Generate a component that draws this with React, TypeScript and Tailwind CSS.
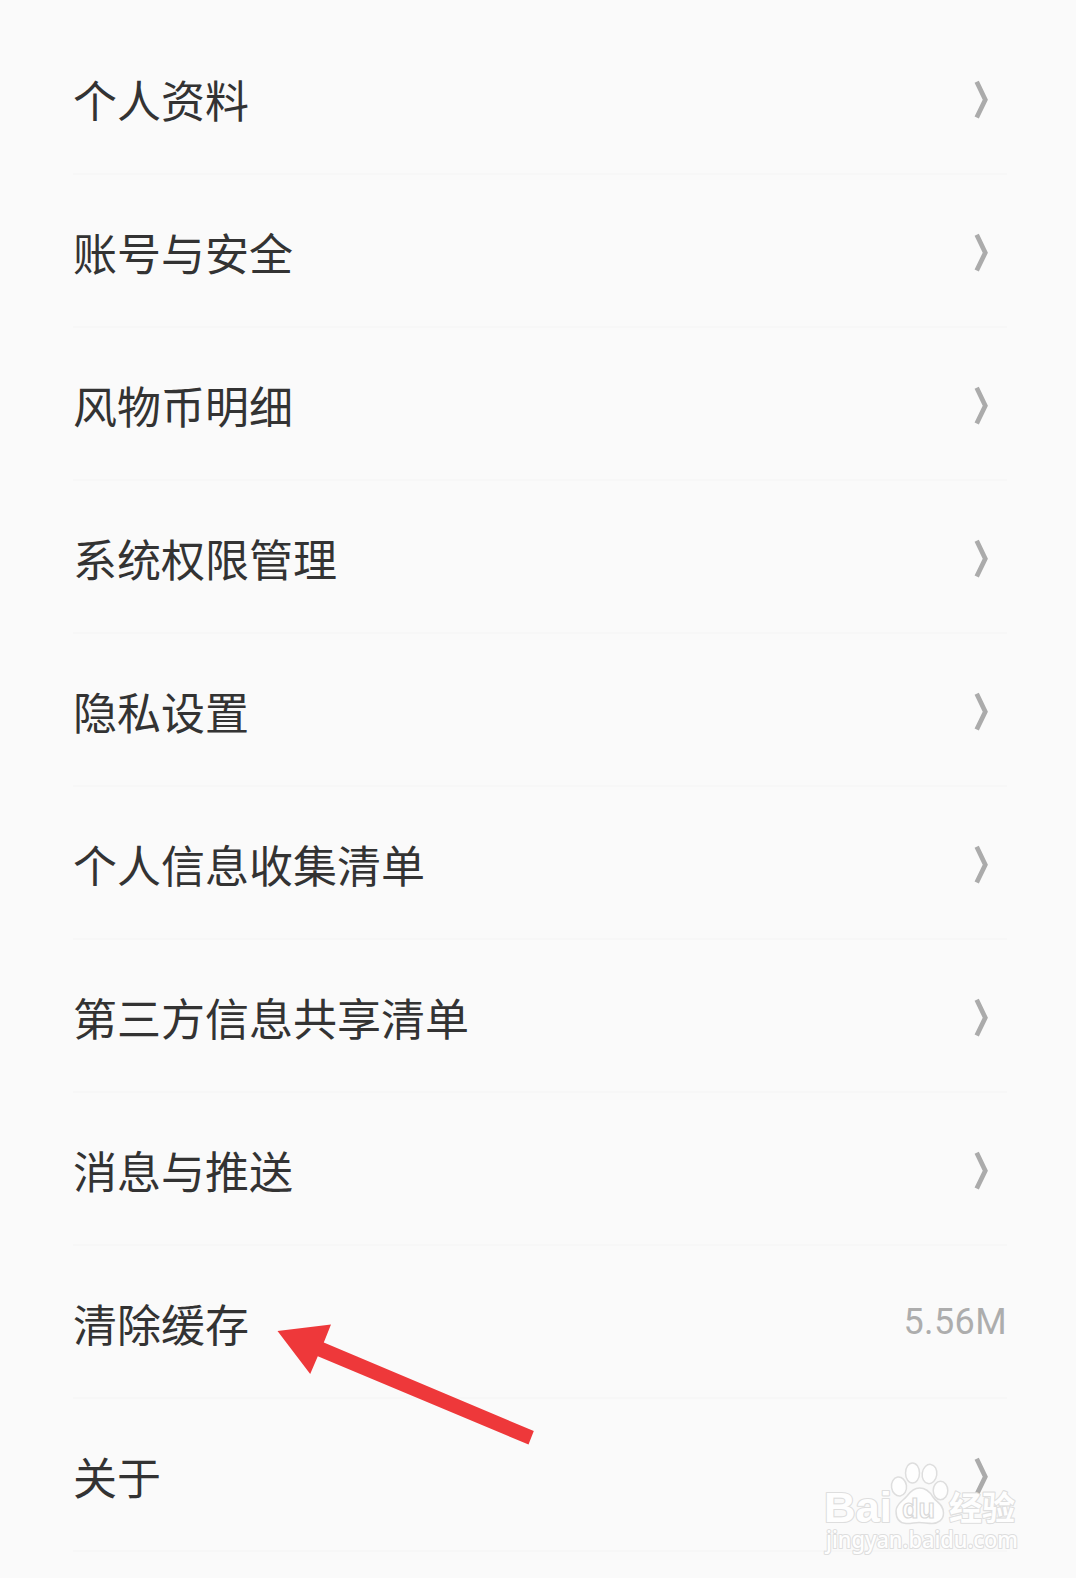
import React from 'react';

interface SettingItem {
  label: string;
  value?: string;
}

const items: SettingItem[] = [
  { label: '个人资料' },
  { label: '账号与安全' },
  { label: '风物币明细' },
  { label: '系统权限管理' },
  { label: '隐私设置' },
  { label: '个人信息收集清单' },
  { label: '第三方信息共享清单' },
  { label: '消息与推送' },
  { label: '清除缓存', value: '5.56M' },
  { label: '关于' },
];

const Chevron: React.FC = () => (
  <svg width="16" height="40" viewBox="0 0 16 40" fill="none" className="mr-[18px] mt-1">
    <path d="M3.7 1.8L12.3 19.7L3.7 37.6" stroke="#ababab" strokeWidth="4.7" />
  </svg>
);

const SettingRow: React.FC<{ item: SettingItem }> = ({ item }) => (
  <li className="flex h-[153px] items-center justify-between border-b-2 border-[#f7f7f7]">
    <span className="mt-0.5 text-[44px] leading-[60px] text-[#333333]">{item.label}</span>
    {item.value ? (
      <span className="font-[Roboto] text-[36px] leading-[42px] tracking-[0.4px] text-[#adadad]">
        {item.value}
      </span>
    ) : (
      <Chevron />
    )}
  </li>
);

// Red pointer aimed at the cache row
const Arrow: React.FC = () => (
  <svg
    width="260"
    height="124"
    viewBox="0 0 260 124"
    className="absolute left-[276px] top-[1323px]"
  >
    <path d="M1.5 8L55 1.5L47.8 19.5L257.8 108L252.5 121.5L41.8 33.3L34.2 51Z" fill="#ee383a" />
  </svg>
);

const Watermark: React.FC = () => (
  <svg
    width="208"
    height="100"
    viewBox="0 0 208 100"
    className="absolute left-[820px] top-[1457px]"
    fill="#fefefe"
    stroke="#dedede"
    strokeWidth="1.5"
  >
    <g paintOrder="stroke" strokeWidth="2.2" strokeLinejoin="round">
      <text x="4" y="65" fontSize="42" fontWeight="700" fontFamily="Liberation Sans, sans-serif" textLength="68" lengthAdjust="spacingAndGlyphs">
        Bai
      </text>
      <text x="129" y="63" fontSize="33" fontWeight="700" fontFamily="Noto Sans CJK SC, sans-serif" textLength="66" lengthAdjust="spacingAndGlyphs">
        经验
      </text>
      <text x="6" y="91" fontSize="23" fontWeight="500" fontFamily="Noto Sans, sans-serif" textLength="192" lengthAdjust="spacingAndGlyphs">
        jingyan.baidu.com
      </text>
    </g>
    <ellipse cx="79" cy="29.5" rx="7.5" ry="9.5" transform="rotate(-8 79 29.5)" />
    <ellipse cx="92.5" cy="16" rx="7" ry="10" />
    <ellipse cx="109.5" cy="17" rx="7.3" ry="9.7" transform="rotate(8 109.5 17)" />
    <ellipse cx="120.5" cy="33.5" rx="7.3" ry="9.3" />
    <path d="M99.5 31C106 31 110 35 113 40C116 45 123.5 47 123.5 56C123.5 63 118 66.5 112 66.5C107 66.5 104 65.5 99 65.5C94 65.5 91 67 86 66.5C79 66 76 61 76 54C76 47 83 44 87 39C90 35 94 31 99.5 31Z" />
    <text x="82" y="61" fontSize="28" fontWeight="700" fontFamily="Liberation Sans, sans-serif" strokeWidth="1.2" stroke="#d8d8d8" textLength="33" lengthAdjust="spacingAndGlyphs">
      du
    </text>
  </svg>
);

const App: React.FC = () => {
  return (
    <div className="relative h-[1578px] overflow-hidden bg-[#fafafa] pl-[73px] pr-[69px] pt-[22px] font-['Noto_Sans_CJK_SC',sans-serif]">
      <ul>
        {items.map((item) => (
          <SettingRow key={item.label} item={item} />
        ))}
      </ul>
      <Arrow />
      <Watermark />
    </div>
  );
};

export default App;
